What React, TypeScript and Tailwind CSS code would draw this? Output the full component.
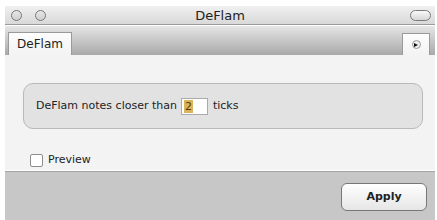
export default function App() {
  return (
    <div
      className="w-[437px] h-[220px] bg-white pt-[6px] pl-[5px] pr-[2px] overflow-hidden"
      style={{ fontFamily: '"DejaVu Sans", "Liberation Sans", sans-serif' }}
    >
      <div className="flex flex-col h-full bg-[#f3f3f3]">
        {/* title bar */}
        <div className="relative h-[19px] flex items-center bg-gradient-to-b from-[#f0f0f0] to-[#d9d9d9] border-b border-[#9a9a9a]">
          <div className="flex gap-[13px] pl-[6px]">
            <span className="w-[11px] h-[11px] rounded-full border border-[#777] bg-gradient-to-b from-[#e8e8e8] to-[#cfcfcf]" />
            <span className="w-[11px] h-[11px] rounded-full border border-[#777] bg-gradient-to-b from-[#e8e8e8] to-[#cfcfcf]" />
          </div>
          <span className="absolute left-0 right-0 text-center text-[13px] text-[#222] leading-none">
            DeFlam
          </span>
          <span className="ml-auto mr-[4px] w-[21px] h-[11px] rounded-full border border-[#7a7a7a] bg-gradient-to-b from-[#fafafa] to-[#d6d6d6]" />
        </div>

        {/* tab bar */}
        <div className="h-[30px] flex items-end justify-between pl-[3px] pr-[5px] bg-gradient-to-b from-[#e6e6e6] to-[#a9a9a9] border-t border-white">
          <div className="h-[23px] w-[64px] flex items-center justify-center bg-gradient-to-b from-[#fdfdfd] to-[#f3f3f3] border border-b-0 border-[#9a9a9a] text-[12px] font-medium text-[#222]">
            DeFlam
          </div>
          <div className="h-[22px] w-[28px] flex items-center justify-center bg-gradient-to-b from-[#fdfdfd] to-[#f3f3f3] border border-b-0 border-[#9a9a9a]">
            <span className="w-[9px] h-[9px] rounded-full border border-[#999] bg-[#eee] flex items-center justify-center">
              <span className="w-0 h-0 border-y-[2.5px] border-y-transparent border-l-[4px] border-l-[#111]" />
            </span>
          </div>
        </div>

        {/* content */}
        <div className="flex-1 flex flex-col pt-[28px] pl-[18px] pr-[12px]">
          <div className="h-[46px] flex items-center gap-[4px] pl-[12px] rounded-[10px] bg-[#e2e2e2] border border-[#b9b9b9] text-[11px] text-[#222]">
            <span>DeFlam notes closer than</span>
            <span className="w-[27px] h-[17px] bg-white border border-[#aaa] flex items-center pl-[2px]">
              <span className="bg-[#d9b45a] text-[#5a3a00] leading-[13px] px-[1px]">2</span>
            </span>
            <span className="ml-[1px]">ticks</span>
          </div>
          <label className="mt-[23px] ml-[7px] flex items-center gap-[5px] text-[11px] text-[#222]">
            <span className="w-[13px] h-[13px] border border-[#8d8d8d] bg-white rounded-[2px]" />
            Preview
          </label>
        </div>

        {/* bottom bar */}
        <div className="border-t border-white">
          <div className="h-[49px] flex items-start justify-end pt-[11px] pr-[8px] bg-[#c7c7c7] border-t border-[#a3a3a3]">
            <button className="w-[86px] h-[28px] rounded-[6px] border border-[#777] bg-gradient-to-b from-[#ffffff] to-[#e6e6e6] text-[11px] font-bold text-[#222]">
              Apply
            </button>
          </div>
        </div>
      </div>
    </div>
  );
}
